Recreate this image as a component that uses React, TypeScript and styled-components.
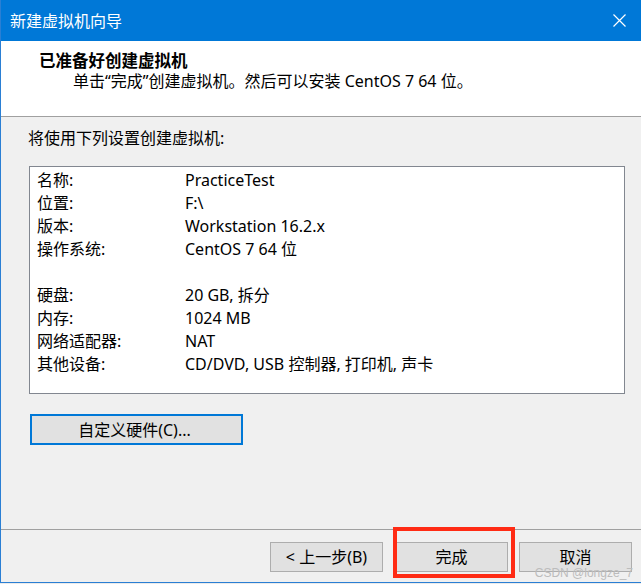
import React from "react";
import styled, { createGlobalStyle } from "styled-components";

const Global = createGlobalStyle`
  html, body { margin: 0; padding: 0; background: #ebebeb; }
  body { font-family: "Noto Sans", "Noto Sans CJK SC", sans-serif; }
  * { box-sizing: border-box; }
`;

const Window = styled.div`
  position: relative;
  width: 641px;
  height: 583px;
  border-left: 1px solid #2a7fd4;
  border-bottom: 1px solid #2a7fd4;
  background: #f0f0f0;
  display: flex;
  flex-direction: column;
  font-size: 16px;
  color: #000;
  overflow: hidden;
`;

const TitleBar = styled.div`
  height: 41px;
  flex: none;
  background: #0078d7;
  color: #fff;
  display: flex;
  align-items: center;
  justify-content: space-between;
  padding: 0 15px 0 9px;
  font-size: 16px;
  line-height: 20px;
`;

const CloseIcon = styled.svg`
  width: 13px;
  height: 13px;
  display: block;
`;

const Header = styled.div`
  height: 76px;
  flex: none;
  background: #fff;
  border-bottom: 1px solid #a0a0a0;
  padding: 10px 0 0 38px;
`;

const HeaderTitle = styled.div`
  font-weight: 700;
  font-size: 16.5px;
  line-height: 20px;
`;

const HeaderSub = styled.div`
  line-height: 20px;
  padding-left: 34px;
`;

const Body = styled.div`
  flex: 1;
  padding: 10px 0 0 27px;
  display: flex;
  flex-direction: column;
  align-items: flex-start;
`;

const Intro = styled.div`
  line-height: 22px;
`;

const ListBox = styled.div`
  margin: 17px 0 0 1px;
  width: 596px;
  height: 228px;
  background: #fff;
  border: 1px solid #828790;
  padding: 2px 0 0 7px;
  display: grid;
  grid-template-columns: 148px 1fr;
  grid-auto-rows: 23px;
  line-height: 23px;
`;

const Cell = styled.div`
  white-space: nowrap;
`;

const Spacer = styled.div`
  grid-column: 1 / span 2;
`;

const CustomButton = styled.button`
  margin: 20px 0 0 2px;
  width: 213px;
  height: 31px;
  background: #e1e1e1;
  border: 2px solid #0078d7;
  font: inherit;
  font-size: 16px;
  color: #000;
  padding: 0 4px 0 0;
  line-height: 26px;
`;

const Footer = styled.div`
  height: 53px;
  flex: none;
  border-top: 1px solid #a0a0a0;
  padding: 12px 9px 0 0;
  display: flex;
  justify-content: flex-end;
  align-items: flex-start;
`;

const WizardButton = styled.button<{ $gap?: number }>`
  width: 113px;
  height: 30px;
  margin-right: ${(p) => p.$gap ?? 0}px;
  background: #e1e1e1;
  border: 1px solid #adadad;
  font: inherit;
  font-size: 16px;
  color: #000;
  padding: 0;
  line-height: 26px;
`;

const Highlight = styled.div`
  position: absolute;
  left: 392px;
  top: 527px;
  width: 122px;
  height: 51px;
  border: 4px solid #ff2b14;
  pointer-events: none;
`;

const Watermark = styled.div`
  position: absolute;
  right: 8px;
  top: 566px;
  font-family: "Liberation Sans", sans-serif;
  font-size: 12px;
  line-height: 14px;
  color: #bcbcbc;
  white-space: nowrap;
`;

const rows: [string, string][] = [
  ["名称:", "PracticeTest"],
  ["位置:", "F:\\"],
  ["版本:", "Workstation 16.2.x"],
  ["操作系统:", "CentOS 7 64 位"],
];

const rows2: [string, string][] = [
  ["硬盘:", "20 GB, 拆分"],
  ["内存:", "1024 MB"],
  ["网络适配器:", "NAT"],
  ["其他设备:", "CD/DVD, USB 控制器, 打印机, 声卡"],
];

export default function App() {
  return (
    <>
      <Global />
      <Window>
        <TitleBar>
          <span>新建虚拟机向导</span>
          <CloseIcon viewBox="0 0 13 13">
            <path d="M0.5 0.5 L12.5 12.5 M12.5 0.5 L0.5 12.5" stroke="#fff" strokeWidth="1.2" fill="none" />
          </CloseIcon>
        </TitleBar>
        <Header>
          <HeaderTitle>已准备好创建虚拟机</HeaderTitle>
          <HeaderSub>单击“完成”创建虚拟机。然后可以安装 CentOS 7 64 位。</HeaderSub>
        </Header>
        <Body>
          <Intro>将使用下列设置创建虚拟机:</Intro>
          <ListBox>
            {rows.map(([k, v]) => (
              <React.Fragment key={k}>
                <Cell>{k}</Cell>
                <Cell>{v}</Cell>
              </React.Fragment>
            ))}
            <Spacer />
            {rows2.map(([k, v]) => (
              <React.Fragment key={k}>
                <Cell>{k}</Cell>
                <Cell>{v}</Cell>
              </React.Fragment>
            ))}
          </ListBox>
          <CustomButton>自定义硬件(C)...</CustomButton>
        </Body>
        <Footer>
          <WizardButton $gap={12}>&lt; 上一步(B)</WizardButton>
          <WizardButton $gap={11}>完成</WizardButton>
          <WizardButton>取消</WizardButton>
        </Footer>
        <Highlight />
        <Watermark>CSDN @longze_7</Watermark>
      </Window>
    </>
  );
}
